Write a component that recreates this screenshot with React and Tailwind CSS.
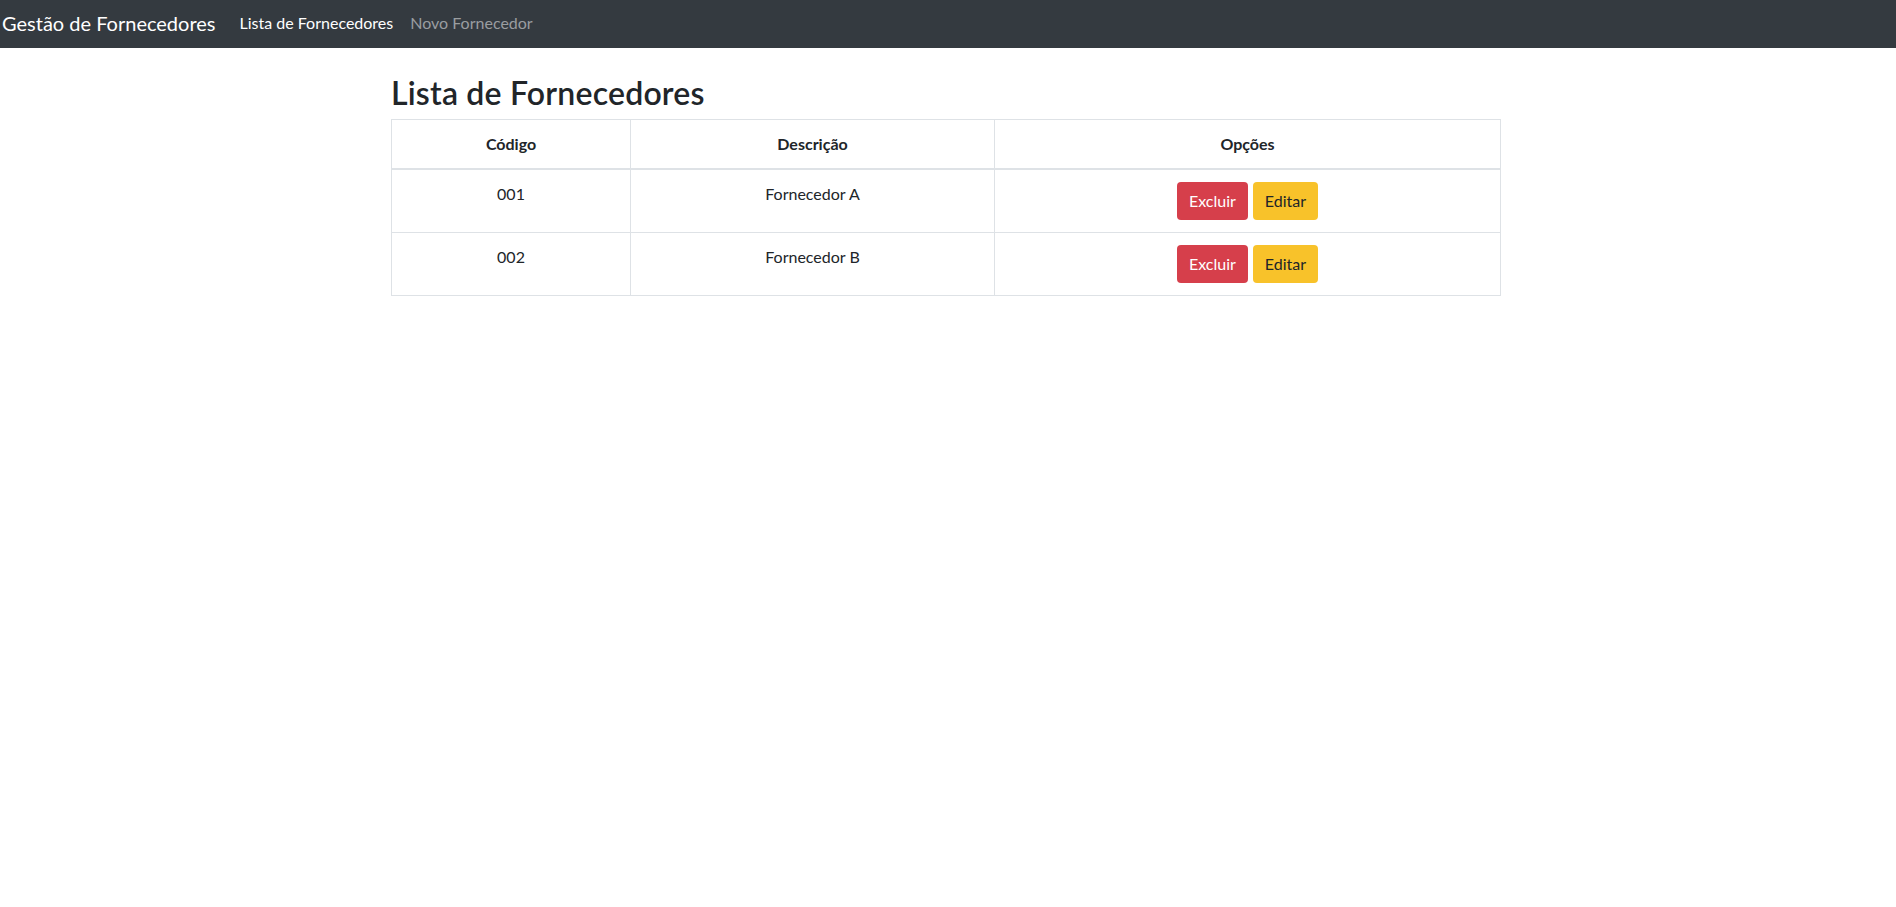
import React from "react";

const fornecedores = [
    { codigo: "001", descricao: "Fornecedor A" },
    { codigo: "002", descricao: "Fornecedor B" },
];

function Navbar() {
    return (
        <nav className="h-[48px] bg-[#343a40] flex items-center pl-[2px] pb-[3px]">
            <a href="#" className="text-white text-[20px] leading-[30px] mr-[24px]">
                Gestão de Fornecedores
            </a>
            <div className="flex items-center gap-[17px] text-[16px] leading-[24px]">
                <a href="#" className="text-white">Lista de Fornecedores</a>
                <a href="#" className="text-[#9a9da0]">Novo Fornecedor</a>
            </div>
        </nav>
    );
}

export default function App() {
    return (
        <div className="min-h-screen bg-white text-[#212529]" style={{ fontFamily: "Lato, 'Noto Sans', sans-serif" }}>
            <Navbar />
            <main className="w-[1110px] ml-[391px] pt-[26px]">
                <h2 className="text-[32px] leading-[38px] font-semibold tracking-[0.2px] mb-[7px]">Lista de Fornecedores</h2>
                <table className="w-full border-collapse text-[16px] leading-[24px]">
                    <thead>
                        <tr>
                            <th className="w-[239px] border border-[#dee2e6] border-b-2 p-[12px] text-center font-bold">Código</th>
                            <th className="w-[364px] border border-[#dee2e6] border-b-2 p-[12px] text-center font-bold">Descrição</th>
                            <th className="border border-[#dee2e6] border-b-2 p-[12px] text-center font-bold">Opções</th>
                        </tr>
                    </thead>
                    <tbody>
                        {fornecedores.map((f) => (
                            <tr key={f.codigo}>
                                <td className="border border-[#dee2e6] p-[12px] text-center align-top">{f.codigo}</td>
                                <td className="border border-[#dee2e6] p-[12px] text-center align-top">{f.descricao}</td>
                                <td className="border border-[#dee2e6] p-[12px] text-center align-top">
                                    <div className="flex justify-center gap-[5px]">
                                        <button className="h-[38px] px-[12px] rounded-[4px] bg-[#d63f4b] text-white">Excluir</button>
                                        <button className="h-[38px] px-[12px] rounded-[4px] bg-[#f8c22a] text-[#212529]">Editar</button>
                                    </div>
                                </td>
                            </tr>
                        ))}
                    </tbody>
                </table>
            </main>
        </div>
    );
}
